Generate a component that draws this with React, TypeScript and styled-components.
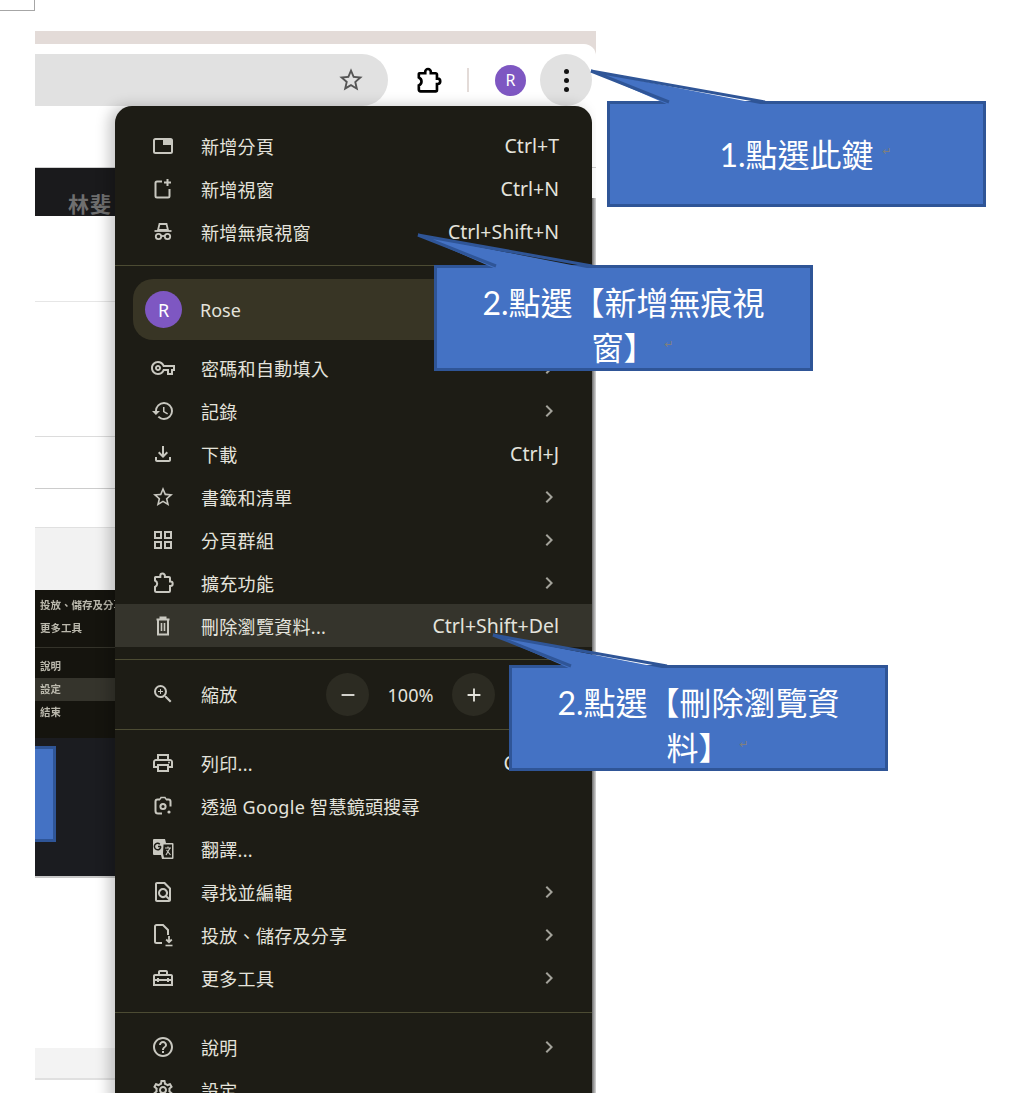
import React from 'react';
import styled, { createGlobalStyle } from 'styled-components';
import {
    MdAdd,
    MdChevronRight,
    MdOutlineFileDownload,
    MdOutlineFindInPage,
    MdOutlineGridView,
    MdOutlineHelpOutline,
    MdOutlineHistory,
    MdOutlineHomeRepairService,
    MdOutlinePrint,
    MdOutlineSettings,
    MdOutlineVpnKey,
    MdRemove,
    MdStarBorder,
    MdZoomIn,
} from 'react-icons/md';

const menuText = '#e4e3dc';
const iconColor = '#c9c8c0';
const calloutFill = '#4472c4';
const calloutEdge = '#2f5597';
const menuFont = '"Noto Sans", "Noto Sans CJK TC", sans-serif';

const GlobalStyle = createGlobalStyle`
    html, body {
        margin: 0;
        padding: 0;
        background: #fff;
    }
`;

const Sheet = styled.div`
    position: relative;
    width: 1022px;
    height: 1093px;
    overflow: hidden;
    background: #fff;
`;

const CropMark = styled.div`
    width: 34px;
    height: 10px;
    border-right: 1px solid #a6a6a6;
    border-bottom: 1px solid #a6a6a6;
`;

const Figure = styled.div`
    position: relative;
    width: 561px;
    height: 1062px;
    margin: 20px 0 0 35px;
    overflow: hidden;
    background: #e3dbd8;
`;

const TabStrip = styled.div`
    height: 13px;
`;

const Toolbar = styled.div`
    display: flex;
    align-items: center;
    height: 52px;
    padding-top: 10px;
    background: #fff;
    border-top-right-radius: 12px;
`;

const AddressBar = styled.div`
    display: flex;
    align-items: center;
    justify-content: flex-end;
    width: 353px;
    height: 52px;
    padding-right: 23px;
    box-sizing: border-box;
    background: #e1e1e1;
    border-radius: 0 26px 26px 0;
    color: #555;
`;

const ExtensionButton = styled.div`
    display: flex;
    margin-left: 26px;
    color: #000;
`;

const ToolbarDivider = styled.div`
    width: 2px;
    height: 24px;
    margin-left: 24px;
    background: #e3dbd8;
`;

const Avatar = styled.div<{ $size: number; $font: number }>`
    display: flex;
    flex: none;
    align-items: center;
    justify-content: center;
    width: ${({ $size }) => $size}px;
    height: ${({ $size }) => $size}px;
    border-radius: 50%;
    background: #7e57c2;
    color: #fff;
    font-family: ${menuFont};
    font-size: ${({ $font }) => $font}px;
`;

const ToolbarAvatar = styled(Avatar)`
    margin-left: 26px;
`;

const MenuButton = styled.div`
    display: flex;
    flex-direction: column;
    align-items: center;
    justify-content: center;
    gap: 4px;
    width: 52px;
    height: 52px;
    margin-left: 14px;
    border-radius: 50%;
    background: #e1e1e1;
`;

const MenuDot = styled.span`
    width: 5px;
    height: 5px;
    border-radius: 50%;
    background: #111;
`;

const Page = styled.div`
    height: 1000px;
    background: #fff;
`;

const PageTop = styled.div`
    height: 61px;
    border-bottom: 1px solid #cfcfcf;
`;

const PageColumn = styled.div`
    width: 82px;
`;

const TitleStrip = styled.div`
    position: relative;
    height: 48px;
    overflow: hidden;
    background: #1a1a1c;
`;

const TitleText = styled.span`
    display: block;
    padding: 22px 0 0 33px;
    color: #6f6f6f;
    font: 700 21px/28px ${menuFont};
    letter-spacing: 1px;
    white-space: nowrap;
`;

const PageBlock = styled.div<{ $height: number; $line: string }>`
    height: ${({ $height }) => $height}px;
    border-bottom: 1px solid ${({ $line }) => $line};
`;

const PageBand = styled.div`
    height: 62px;
    background: #f2f2f2;
`;

const Thumbnail = styled.div`
    height: 148px;
    padding-top: 4px;
    box-sizing: border-box;
    overflow: hidden;
    background: #15140e;
    filter: blur(0.4px);
`;

const ThumbRow = styled.div<{ $active?: boolean }>`
    height: 23px;
    padding-left: 5px;
    background: ${({ $active }) => ($active ? '#35342c' : 'transparent')};
    color: #b9b7ab;
    font: 700 10.5px/23px ${menuFont};
    white-space: nowrap;
`;

const ThumbRule = styled.div`
    height: 1px;
    margin: 7px 0;
    background: #34332a;
`;

const DarkPanel = styled.div`
    height: 140px;
    padding-top: 8px;
    box-sizing: border-box;
    background: #1b1c20;
    border-bottom: 2px solid #c8c8c8;
`;

const ThumbCallout = styled.div`
    width: 18px;
    height: 90px;
    background: ${calloutFill};
    border: 3px solid ${calloutEdge};
    border-left: 0;
`;

const BottomBand = styled.div`
    height: 30px;
    margin-top: 170px;
    background: #f3f3f3;
    border-bottom: 2px solid #e0e0e0;
`;

const Menu = styled.div`
    position: absolute;
    top: 75px;
    left: 80px;
    width: 477px;
    height: 1000px;
    padding-top: 18px;
    box-sizing: border-box;
    background: #1d1c15;
    border-radius: 17px 17px 0 0;
    box-shadow: -6px 0 14px rgba(0, 0, 0, 0.22);
    color: ${menuText};
    font-family: ${menuFont};

    &::after {
        content: '';
        position: absolute;
        top: 92px;
        bottom: 0;
        left: 100%;
        width: 4px;
        background: linear-gradient(to right, #6b6b6b, #d8d8d8);
    }
`;

const Row = styled.div<{ $active?: boolean }>`
    display: flex;
    align-items: center;
    height: 43px;
    padding: 0 33px 0 36px;
    background: ${({ $active }) => ($active ? '#35342c' : 'transparent')};
    font-size: 18px;
`;

const IconSlot = styled.span`
    display: flex;
    flex: none;
    align-items: center;
    justify-content: center;
    width: 24px;
    height: 24px;
    margin-right: 26px;
    color: ${iconColor};
`;

const Label = styled.span`
    letter-spacing: 0.3px;
    white-space: nowrap;
`;

const Shortcut = styled.span`
    margin-left: auto;
    font-size: 19.5px;
    white-space: nowrap;
`;

const Chevron = styled.span`
    display: flex;
    margin: 0 -2px 0 auto;
    color: #a3a29a;
`;

const Separator = styled.div<{ $before: number; $after: number }>`
    height: 1px;
    margin: ${({ $before }) => $before}px 0 ${({ $after }) => $after}px;
    background: #4c4b33;
`;

const ProfileRow = styled.div`
    display: flex;
    align-items: center;
    height: 61px;
    margin: 0 18px 6px;
    padding-left: 12px;
    background: #383525;
    border-radius: 20px;
    font-size: 18px;
`;

const ProfileName = styled.span`
    margin-left: 18px;
`;

const ZoomControls = styled.div`
    display: flex;
    align-items: center;
    margin: 2px 64px 0 auto;
`;

const ZoomButton = styled.span`
    display: flex;
    align-items: center;
    justify-content: center;
    width: 43px;
    height: 43px;
    border-radius: 50%;
    background: #2c2b22;
`;

const ZoomValue = styled.span`
    width: 83px;
    text-align: center;
`;

const Callout = styled.div<{ $x: number; $y: number; $lift?: number }>`
    position: absolute;
    top: ${({ $y }) => $y}px;
    left: ${({ $x }) => $x}px;
    display: flex;
    align-items: center;
    justify-content: center;
    width: 379px;
    height: 106px;
    padding-top: ${({ $lift }) => $lift ?? 0}px;
    box-sizing: border-box;
    background: ${calloutFill};
    border: 3px solid ${calloutEdge};
    color: #fff;
    font: 32px/45px Lato, "Noto Sans CJK TC", sans-serif;
    text-align: center;
`;

const CalloutTail = styled.svg`
    position: absolute;
    top: -3px;
    left: -3px;
    width: 1px;
    height: 1px;
    overflow: visible;
`;

const ReturnMark = styled.span`
    position: absolute;
    margin: 8px 0 0 9px;
    color: #7f7f7f;
    font: 11px/24px "DejaVu Sans", sans-serif;
`;

const Tail = () => (
    <CalloutTail aria-hidden>
        <polygon points="-16,-30 62,4 158,4" fill={calloutFill} />
        <polyline points="62,1 -16,-30 158,1" fill="none" stroke={calloutEdge} strokeWidth="3" />
    </CalloutTail>
);

const ExtensionIcon: React.FC<{ size?: number; weight?: number }> = ({ size = 24, weight = 2 }) => (
    <svg width={size} height={size} viewBox="0 0 24 24" fill="none" stroke="currentColor" strokeWidth={weight}>
        <path d="M4.500 6h4.800V4.800a2.300 2.300 0 0 1 4.600 0V6h4a1.100 1.100 0 0 1 1.100 1.100V10.500h.5a2.200 2.200 0 0 1 0 4.400h-.5v5a1.100 1.100 0 0 1-1.100 1.100H5.500A1.500 1.500 0 0 1 4 19.500V16c1.300-.6 2.200-1.800 2.200-3.200S5.300 10.100 4 9.500V6.500a.5.500 0 0 1 .5-.5z" />
    </svg>
);

const TrashIcon = () => (
    <svg width="22" height="22" viewBox="0 0 22 22" fill="none" stroke="currentColor" strokeWidth="2">
        <path d="M4.500 4.500h13M8.500 4.500V2.500h5v2M6 4.500v15h10v-15" />
        <path d="M9.500 8v8M12.500 8v8" strokeWidth="1.600" />
    </svg>
);

const NewTabIcon = () => (
    <svg width="22" height="22" viewBox="0 0 22 22">
        <rect x="2" y="4" width="18" height="14" rx="1.5" fill="none" stroke="currentColor" strokeWidth="2" />
        <rect x="11" y="4" width="9" height="6" fill="currentColor" />
    </svg>
);

const NewWindowIcon = () => (
    <svg width="22" height="22" viewBox="0 0 22 22" fill="none" stroke="currentColor" strokeWidth="2">
        <path d="M10 3.5H5A1.5 1.5 0 0 0 3.500 5v13A1.500 1.500 0 0 0 5 19.500h11a1.500 1.500 0 0 0 1.500-1.500v-7" />
        <path d="M15.500 1v7M12 4.500h7" />
    </svg>
);

const IncognitoIcon = () => (
    <svg width="22" height="22" viewBox="0 0 22 22" fill="none" stroke="currentColor" strokeWidth="1.800">
        <path d="M7.500 3h7l1.500 6H6z" />
        <path d="M2.500 10h17" />
        <circle cx="6.500" cy="15.500" r="2.700" />
        <circle cx="15.500" cy="15.500" r="2.700" />
        <path d="M9.200 15h3.600" />
    </svg>
);

const LensIcon = () => (
    <svg width="22" height="22" viewBox="0 0 22 22" fill="none" stroke="currentColor" strokeWidth="2">
        <path d="M8 4.500H5.500a2 2 0 0 0-2 2V16a2.500 2.500 0 0 0 2.500 2.500h4M14 4.500h2.500a2 2 0 0 1 2 2v5" />
        <path d="M8 4.500l1-2h4l1 2" strokeWidth="1.500" />
        <circle cx="11" cy="11.500" r="2.600" />
        <circle cx="17" cy="17" r="1.600" fill="currentColor" stroke="none" />
    </svg>
);

const TranslateIcon = () => (
    <svg width="24" height="24" viewBox="0 0 24 24">
        <path d="M3 2h11l1 4h6.500a1 1 0 0 1 1 1v14a1 1 0 0 1-1 1H11l-1-4H3a1 1 0 0 1-1-1V3a1 1 0 0 1 1-1z" fill="currentColor" />
        <path d="M12.500 7.500h8.500v13h-8l-1-4z" fill="#1d1c15" />
        <path d="M9.800 9.500a3.200 3.200 0 1 1-1-2.300M7 9.500h3" fill="none" stroke="#1d1c15" strokeWidth="1.500" />
        <path d="M14 11h6M17 9.500V11M15 18l4-7M15.500 13l4 5" fill="none" stroke="currentColor" strokeWidth="1.200" />
    </svg>
);

const SaveShareIcon = () => (
    <svg width="24" height="24" viewBox="0 0 24 24" fill="none" stroke="currentColor" strokeWidth="2">
        <path d="M11 20H5.500A1.500 1.500 0 0 1 4 18.500v-15A1.500 1.500 0 0 1 5.500 2H12l5 5v5" />
        <path d="M18 13v6M15.200 16.500l2.800 2.800 2.800-2.800" strokeWidth="1.800" />
        <path d="M14.500 22.500h7" strokeWidth="1.600" />
    </svg>
);

type MenuItem = {
    label: string;
    icon: React.ReactNode;
    shortcut?: string;
    more?: boolean;
    active?: boolean;
};

const md = { size: 24 };

const newItems: MenuItem[] = [
    { label: '新增分頁', icon: <NewTabIcon />, shortcut: 'Ctrl+T' },
    { label: '新增視窗', icon: <NewWindowIcon />, shortcut: 'Ctrl+N' },
    { label: '新增無痕視窗', icon: <IncognitoIcon />, shortcut: 'Ctrl+Shift+N' },
];

const browserItems: MenuItem[] = [
    { label: '密碼和自動填入', icon: <MdOutlineVpnKey {...md} />, more: true },
    { label: '記錄', icon: <MdOutlineHistory {...md} />, more: true },
    { label: '下載', icon: <MdOutlineFileDownload {...md} />, shortcut: 'Ctrl+J' },
    { label: '書籤和清單', icon: <MdStarBorder {...md} />, more: true },
    { label: '分頁群組', icon: <MdOutlineGridView {...md} />, more: true },
    { label: '擴充功能', icon: <ExtensionIcon />, more: true },
    { label: '刪除瀏覽資料...', icon: <TrashIcon />, shortcut: 'Ctrl+Shift+Del', active: true },
];

const pageItems: MenuItem[] = [
    { label: '列印...', icon: <MdOutlinePrint {...md} />, shortcut: 'Ctrl+P' },
    { label: '透過 Google 智慧鏡頭搜尋', icon: <LensIcon /> },
    { label: '翻譯...', icon: <TranslateIcon /> },
    { label: '尋找並編輯', icon: <MdOutlineFindInPage {...md} />, more: true },
    { label: '投放、儲存及分享', icon: <SaveShareIcon />, more: true },
    { label: '更多工具', icon: <MdOutlineHomeRepairService {...md} />, more: true },
];

const helpItems: MenuItem[] = [
    { label: '說明', icon: <MdOutlineHelpOutline {...md} />, more: true },
    { label: '設定', icon: <MdOutlineSettings {...md} /> },
];

const MenuRows: React.FC<{ items: MenuItem[] }> = ({ items }) => (
    <>
        {items.map((item) => (
            <Row key={item.label} $active={item.active}>
                <IconSlot>{item.icon}</IconSlot>
                <Label>{item.label}</Label>
                {item.shortcut && <Shortcut>{item.shortcut}</Shortcut>}
                {item.more && (
                    <Chevron>
                        <MdChevronRight size={24} />
                    </Chevron>
                )}
            </Row>
        ))}
    </>
);

const App = () => (
    <Sheet>
        <GlobalStyle />
        <CropMark />

        <Figure>
            <TabStrip />
            <Toolbar>
                <AddressBar>
                    <MdStarBorder size={28} />
                </AddressBar>
                <ExtensionButton>
                    <ExtensionIcon size={29} weight={2.2} />
                </ExtensionButton>
                <ToolbarDivider />
                <ToolbarAvatar $size={31} $font={16}>
                    R
                </ToolbarAvatar>
                <MenuButton>
                    <MenuDot />
                    <MenuDot />
                    <MenuDot />
                </MenuButton>
            </Toolbar>

            <Page>
                <PageTop />
                <PageColumn>
                    <TitleStrip>
                        <TitleText>林斐</TitleText>
                    </TitleStrip>
                    <PageBlock $height={85} $line="#e6e6e6" />
                    <PageBlock $height={134} $line="#dcdcdc" />
                    <PageBlock $height={51} $line="#cccccc" />
                    <PageBlock $height={38} $line="#e0e0e0" />
                    <PageBand />
                    <Thumbnail>
                        <ThumbRow>投放、儲存及分享</ThumbRow>
                        <ThumbRow>更多工具</ThumbRow>
                        <ThumbRule />
                        <ThumbRow>說明</ThumbRow>
                        <ThumbRow $active>設定</ThumbRow>
                        <ThumbRow>結束</ThumbRow>
                    </Thumbnail>
                    <DarkPanel>
                        <ThumbCallout />
                    </DarkPanel>
                    <BottomBand />
                </PageColumn>
            </Page>

            <Menu>
                <MenuRows items={newItems} />
                <Separator $before={12} $after={13} />
                <ProfileRow>
                    <Avatar $size={37} $font={18}>
                        R
                    </Avatar>
                    <ProfileName>Rose</ProfileName>
                </ProfileRow>
                <MenuRows items={browserItems} />
                <Separator $before={12} $after={12} />
                <Row>
                    <IconSlot>
                        <MdZoomIn size={24} />
                    </IconSlot>
                    <Label>縮放</Label>
                    <ZoomControls>
                        <ZoomButton>
                            <MdRemove size={22} />
                        </ZoomButton>
                        <ZoomValue>100%</ZoomValue>
                        <ZoomButton>
                            <MdAdd size={22} />
                        </ZoomButton>
                    </ZoomControls>
                </Row>
                <Separator $before={14} $after={11} />
                <MenuRows items={pageItems} />
                <Separator $before={13} $after={12} />
                <MenuRows items={helpItems} />
            </Menu>
        </Figure>

        <Callout $x={607} $y={101}>
            <Tail />
            <span>
                1.點選此鍵
                <ReturnMark>↵</ReturnMark>
            </span>
        </Callout>
        <Callout $x={434} $y={265} $lift={13}>
            <Tail />
            <span>
                2.點選【新增無痕視
                <br />
                窗】
                <ReturnMark>↵</ReturnMark>
            </span>
        </Callout>
        <Callout $x={509} $y={665} $lift={13}>
            <Tail />
            <span>
                2.點選【刪除瀏覽資
                <br />
                料】
                <ReturnMark>↵</ReturnMark>
            </span>
        </Callout>
    </Sheet>
);

export default App;
